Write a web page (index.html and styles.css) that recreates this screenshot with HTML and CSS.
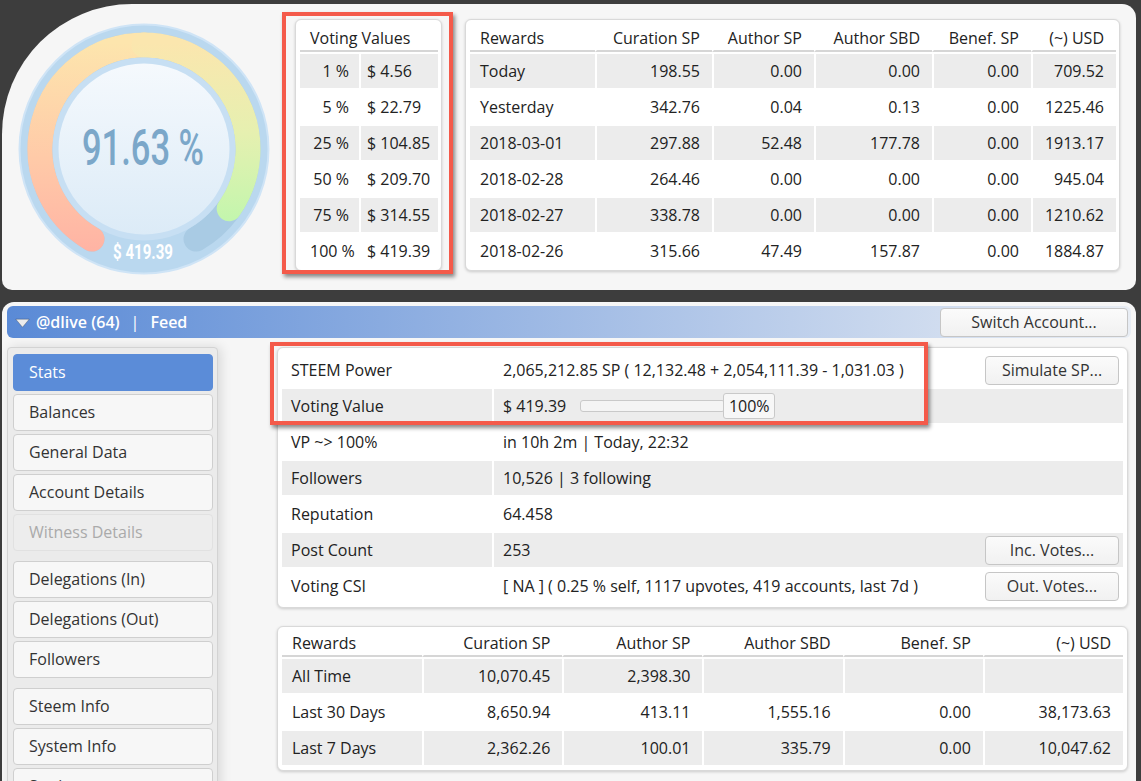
FILE: index.html
```html
<!DOCTYPE html>
<html>
<head>
<meta charset="utf-8">
<title>Steem Stats</title>
<link rel="stylesheet" href="styles.css">
</head>
<body>
<div class="top">
  <svg class="gauge" width="256" height="256" viewBox="0 0 256 256">
    <defs>
      <linearGradient id="gl" gradientUnits="userSpaceOnUse" x1="0" y1="232" x2="0" y2="22">
        <stop offset="0" stop-color="#ffb3a4"/>
        <stop offset="0.45" stop-color="#ffcaa8"/>
        <stop offset="1" stop-color="#fde5ad"/>
      </linearGradient>
      <linearGradient id="gr" gradientUnits="userSpaceOnUse" x1="0" y1="22" x2="0" y2="200">
        <stop offset="0" stop-color="#fbe6ae"/>
        <stop offset="0.5" stop-color="#e6f0b0"/>
        <stop offset="1" stop-color="#c3f6ad"/>
      </linearGradient>
      <linearGradient id="gi" x1="0" y1="0" x2="0" y2="1">
        <stop offset="0" stop-color="#f5f9fd"/>
        <stop offset="1" stop-color="#dcebf7"/>
      </linearGradient>
    </defs>
    <circle cx="128" cy="128" r="124.5" fill="#bad8ef" stroke="#cfe4f6" stroke-width="2"/>
    <path d="M76 218.07 A104 104 0 1 1 180 218.07" fill="none" stroke="#a9cbe4" stroke-width="25" stroke-linecap="round"/>
    <path d="M76 218.07 A104 104 0 0 1 128 24" fill="none" stroke="url(#gl)" stroke-width="25" stroke-linecap="round"/>
    <path d="M128 24 A104 104 0 0 1 213.19 187.65" fill="none" stroke="url(#gr)" stroke-width="25" stroke-linecap="round"/>
    <circle cx="128" cy="128" r="91.5" fill="#c7dff3"/>
    <circle cx="128" cy="128" r="85.5" fill="url(#gi)"/>
    <text class="g-big" x="127" y="144" text-anchor="middle" textLength="122" lengthAdjust="spacingAndGlyphs">91.63 %</text>
    <text class="g-small" x="127" y="238" text-anchor="middle" textLength="60" lengthAdjust="spacingAndGlyphs">$ 419.39</text>
  </svg>

  <div class="card vv-card">
    <table class="grid vv">
      <colgroup><col class="c59"><col class="c79"></colgroup>
      <thead><tr><th colspan="2">Voting Values</th></tr></thead>
      <tbody>
        <tr class="g"><td>1 %</td><td>$ 4.56</td></tr>
        <tr><td>5 %</td><td>$ 22.79</td></tr>
        <tr class="g"><td>25 %</td><td>$ 104.85</td></tr>
        <tr><td>50 %</td><td>$ 209.70</td></tr>
        <tr class="g"><td>75 %</td><td>$ 314.55</td></tr>
        <tr><td>100 %</td><td>$ 419.39</td></tr>
      </tbody>
    </table>
  </div>

  <div class="card rw-card">
    <table class="grid">
      <colgroup><col class="w125"><col class="w117"><col class="w102"><col class="w118"><col class="w99"><col class="w85"></colgroup>
      <thead><tr><th>Rewards</th><th>Curation SP</th><th>Author SP</th><th>Author SBD</th><th>Benef. SP</th><th>(~) USD</th></tr></thead>
      <tbody>
        <tr class="g"><td>Today</td><td>198.55</td><td>0.00</td><td>0.00</td><td>0.00</td><td>709.52</td></tr>
        <tr><td>Yesterday</td><td>342.76</td><td>0.04</td><td>0.13</td><td>0.00</td><td>1225.46</td></tr>
        <tr class="g"><td>2018-03-01</td><td>297.88</td><td>52.48</td><td>177.78</td><td>0.00</td><td>1913.17</td></tr>
        <tr><td>2018-02-28</td><td>264.46</td><td>0.00</td><td>0.00</td><td>0.00</td><td>945.04</td></tr>
        <tr class="g"><td>2018-02-27</td><td>338.78</td><td>0.00</td><td>0.00</td><td>0.00</td><td>1210.62</td></tr>
        <tr><td>2018-02-26</td><td>315.66</td><td>47.49</td><td>157.87</td><td>0.00</td><td>1884.87</td></tr>
      </tbody>
    </table>
  </div>

  <div class="hl hl-a"></div>
</div>

<div class="main">
  <div class="bar">
    <svg class="tri" width="15" height="10" viewBox="0 0 15 10"><path d="M0.8 1.2 H14.2 L7.5 9.2 Z" fill="#ececec" stroke="rgba(0,0,0,0.3)" stroke-width="0.8"/></svg>
    <span class="acct">@dlive (64)</span>
    <span class="pipe">|</span>
    <span class="acct">Feed</span>
    <button class="btn switch">Switch Account...</button>
  </div>

  <div class="content">
    <nav class="side">
      <div class="nav-item active">Stats</div>
      <div class="nav-item">Balances</div>
      <div class="nav-item">General Data</div>
      <div class="nav-item">Account Details</div>
      <div class="nav-item disabled">Witness Details</div>
      <div class="nav-item sep">Delegations (In)</div>
      <div class="nav-item">Delegations (Out)</div>
      <div class="nav-item">Followers</div>
      <div class="nav-item sep">Steem Info</div>
      <div class="nav-item">System Info</div>
      <div class="nav-item">Settings</div>
    </nav>

    <div class="right">
      <div class="card stats-card">
        <table class="grid st">
          <colgroup><col class="w210"><col></colgroup>
          <tbody>
            <tr><td>STEEM Power</td><td class="bc"><div class="row"><span>2,065,212.85 SP ( 12,132.48 + 2,054,111.39 - 1,031.03 )</span><button class="btn sm">Simulate SP...</button></div></td></tr>
            <tr class="g"><td>Voting Value</td><td class="bc"><div class="row start"><span>$ 419.39</span><span class="track"></span><span class="pct">100%</span></div></td></tr>
            <tr><td>VP ~&gt; 100%</td><td>in 10h 2m | Today, 22:32</td></tr>
            <tr class="g"><td>Followers</td><td>10,526 | 3 following</td></tr>
            <tr><td>Reputation</td><td>64.458</td></tr>
            <tr class="g"><td>Post Count</td><td class="bc"><div class="row"><span>253</span><button class="btn sm">Inc. Votes...</button></div></td></tr>
            <tr><td>Voting CSI</td><td class="bc"><div class="row"><span>[ NA ] ( 0.25 % self, 1117 upvotes, 419 accounts, last 7d )</span><button class="btn sm">Out. Votes...</button></div></td></tr>
          </tbody>
        </table>
      </div>

      <div class="card rw2-card">
        <table class="grid">
          <thead><tr><th>Rewards</th><th>Curation SP</th><th>Author SP</th><th>Author SBD</th><th>Benef. SP</th><th>(~) USD</th></tr></thead>
          <tbody>
            <tr class="g"><td>All Time</td><td>10,070.45</td><td>2,398.30</td><td></td><td></td><td></td></tr>
            <tr><td>Last 30 Days</td><td>8,650.94</td><td>413.11</td><td>1,555.16</td><td>0.00</td><td>38,173.63</td></tr>
            <tr class="g"><td>Last 7 Days</td><td>2,362.26</td><td>100.01</td><td>335.79</td><td>0.00</td><td>10,047.62</td></tr>
          </tbody>
        </table>
      </div>
    </div>
  </div>

  <div class="hl hl-b"></div>
</div>
</body>
</html>
```

FILE: styles.css
```css
html, body {
  margin: 0;
  height: 100%;
  overflow: hidden;
  background: #3d3d3d;
}
body {
  font-family: "Open Sans", "Liberation Sans", sans-serif;
  font-size: 16px;
  color: #222;
}

/* ---------- top panel ---------- */
.top {
  position: relative;
  margin: 4px 5px 0 2px;
  height: 286px;
  box-sizing: border-box;
  background: #f6f6f6;
  border-radius: 130px 14px 10px 10px;
  display: flex;
  align-items: flex-start;
  padding: 15px 0 0 14px;
}
.gauge {
  flex: none;
  margin-top: 2px;
}
.g-big {
  font-family: Roboto, "Liberation Sans", sans-serif;
  font-size: 50px;
  font-weight: 500;
  fill: #7ba7c9;
}
.g-small {
  font-family: Roboto, "Liberation Sans", sans-serif;
  font-size: 20px;
  font-weight: 700;
  fill: #ffffff;
}

.card {
  background: #fff;
  border: 1px solid #d9d9d9;
  border-radius: 6px;
  box-shadow: 0 1px 3px rgba(0, 0, 0, 0.18);
  box-sizing: border-box;
}
.vv-card {
  flex: none;
  margin-left: 23px;
  width: 147px;
  padding: 2px 3px 2px 4px;
}
.rw-card {
  flex: none;
  margin-left: 23px;
  width: 655px;
  padding: 2px 3px 2px 4px;
}

/* ---------- tables ---------- */
.grid {
  width: 100%;
  border-collapse: separate;
  border-spacing: 0;
  table-layout: fixed;
}
.grid th,
.grid td {
  padding: 6px 12px 6px 10px;
  line-height: 22px;
  border-left: 2px solid #fff;
  text-align: right;
  font-weight: 400;
  white-space: nowrap;
}
.grid th {
  padding-top: 5px;
  padding-bottom: 1px;
  border-bottom: 2px solid #d6d6d6;
}
.grid td {
  border-top: 2px solid #fff;
}
.grid th:first-child,
.grid td:first-child {
  border-left: 0;
  text-align: left;
}
.grid tr.g td {
  background: #ececec;
}

.c59 { width: 59px; }
.c79 { width: 79px; }
.w125 { width: 125px; }
.w117 { width: 117px; }
.w102 { width: 102px; }
.w118 { width: 118px; }
.w99 { width: 99px; }
.w85 { width: 85px; }
.w210 { width: 210px; }

.vv td:first-child {
  text-align: right;
  padding-right: 10px;
}
.vv td + td {
  text-align: left;
  padding-left: 6px;
  padding-right: 2px;
}

/* ---------- main panel ---------- */
.main {
  position: relative;
  margin: 12px 5px 0 2px;
  height: 520px;
  box-sizing: border-box;
  background: #f6f6f6;
  border-radius: 12px 12px 0 0;
  padding: 4px 5px 0;
}
.bar {
  height: 32px;
  border-radius: 6px;
  background: linear-gradient(to right, #5a8ad6 0%, #e8edf4 100%);
  display: flex;
  align-items: center;
  padding: 0 3px 0 8px;
  color: #fff;
  font-weight: 600;
}
.tri {
  margin-right: 6px;
  margin-top: 1px;
}
.pipe {
  margin: 0 11px;
  font-weight: 400;
}
.btn {
  font-family: inherit;
  font-size: 16px;
  font-weight: 400;
  color: #333;
  height: 29px;
  box-sizing: border-box;
  border: 1px solid #c6c6c6;
  border-radius: 4px;
  background: linear-gradient(#fbfbfb, #f1f1f1);
  padding: 0 10px;
  line-height: 27px;
  white-space: nowrap;
}
.switch {
  margin-left: auto;
  width: 188px;
}

.content {
  display: flex;
  align-items: flex-start;
  margin-top: 9px;
}
.side {
  flex: none;
  width: 211px;
  height: 470px;
  box-sizing: border-box;
  background: #ebebeb;
  border: 1px solid #d3d3d3;
  border-radius: 4px 4px 0 0;
  padding: 6px 4px 0 5px;
  box-shadow: 3px 0 12px rgba(0, 0, 0, 0.12);
}
.nav-item {
  width: 200px;
  height: 37px;
  box-sizing: border-box;
  border: 1px solid #cfcfcf;
  border-radius: 4px;
  background: #f7f7f7;
  padding-left: 15px;
  line-height: 35px;
  margin-bottom: 3px;
  color: #333;
}
.nav-item.active {
  background: #5b8cd8;
  border-color: #5b8cd8;
  color: #fff;
}
.nav-item.disabled {
  background: #ededed;
  border-color: #e1e1e1;
  color: #aaa;
}
.nav-item.sep {
  margin-top: 10px;
}

.right {
  flex: 1;
  margin-left: 59px;
  margin-right: 3px;
}
.stats-card {
  padding: 3px 4px 4px;
}
.st td:first-child {
  padding-left: 9px;
}
.st td + td {
  text-align: left;
  padding-left: 9px;
}
.st td.bc {
  padding: 0 4px 0 9px;
}
.row {
  height: 34px;
  display: flex;
  align-items: center;
  justify-content: space-between;
}
.row.start {
  justify-content: flex-start;
}
.btn.sm {
  width: 134px;
}
.track {
  margin-left: 14px;
  width: 145px;
  height: 12px;
  box-sizing: border-box;
  border: 1px solid #c9c9c9;
  border-radius: 3px;
  background: #f4f4f4;
}
.pct {
  margin-left: -2px;
  width: 52px;
  height: 26px;
  box-sizing: border-box;
  border: 1px solid #c9c9c9;
  border-radius: 3px;
  background: #f7f7f7;
  text-align: center;
  line-height: 24px;
}
.rw2-card {
  margin-top: 18px;
  padding: 0 4px 5px;
}

/* ---------- annotation highlights ---------- */
.hl {
  position: absolute;
  box-sizing: border-box;
  border: 4px solid #f45a4a;
  box-shadow: 2px 3px 4px rgba(0, 0, 0, 0.45);
  pointer-events: none;
}
.hl-a {
  left: 280px;
  top: 8px;
  width: 171px;
  height: 262px;
}
.hl-b {
  left: 268px;
  top: 40px;
  width: 658px;
  height: 83px;
}
```
